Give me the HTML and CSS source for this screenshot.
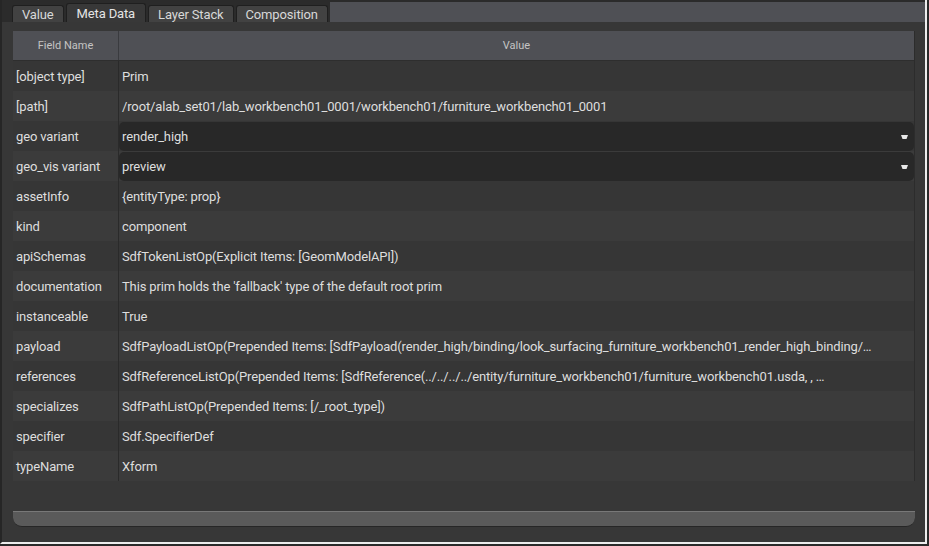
FILE: index.html
```html
<!DOCTYPE html>
<html>
<head>
<meta charset="utf-8">
<link rel="stylesheet" href="styles.css">
</head>
<body>
<div class="frame">
  <div class="tabbar">
    <div class="tab">Value</div>
    <div class="tab active">Meta Data</div>
    <div class="tab">Layer Stack</div>
    <div class="tab">Composition</div>
    <div class="tabfill"></div>
  </div>
  <div class="panel">
    <div class="table">
      <div class="row head">
        <div class="c1">Field Name</div>
        <div class="c2">Value</div>
      </div>
      <div class="row odd"><div class="c1">[object type]</div><div class="c2">Prim</div></div>
      <div class="row even"><div class="c1">[path]</div><div class="c2">/root/alab_set01/lab_workbench01_0001/workbench01/furniture_workbench01_0001</div></div>
      <div class="row odd"><div class="c1">geo variant</div><div class="c2 combo-cell"><div class="combo"><span>render_high</span><svg class="arrow" width="7" height="4" viewBox="0 0 7 4"><polygon points="0,0 7,0 5.5,4 1.5,4" fill="#e8e8e8"/></svg></div></div></div>
      <div class="row even"><div class="c1">geo_vis variant</div><div class="c2 combo-cell"><div class="combo"><span>preview</span><svg class="arrow" width="7" height="4" viewBox="0 0 7 4"><polygon points="0,0 7,0 5.5,4 1.5,4" fill="#e8e8e8"/></svg></div></div></div>
      <div class="row odd"><div class="c1">assetInfo</div><div class="c2">{entityType: prop}</div></div>
      <div class="row even"><div class="c1">kind</div><div class="c2">component</div></div>
      <div class="row odd"><div class="c1">apiSchemas</div><div class="c2">SdfTokenListOp(Explicit Items: [GeomModelAPI])</div></div>
      <div class="row even"><div class="c1">documentation</div><div class="c2">This prim holds the 'fallback' type of the default root prim</div></div>
      <div class="row odd"><div class="c1">instanceable</div><div class="c2">True</div></div>
      <div class="row even"><div class="c1">payload</div><div class="c2">SdfPayloadListOp(Prepended Items: [SdfPayload(render_high/binding/look_surfacing_furniture_workbench01_render_high_binding/…</div></div>
      <div class="row odd"><div class="c1">references</div><div class="c2">SdfReferenceListOp(Prepended Items: [SdfReference(../../../../entity/furniture_workbench01/furniture_workbench01.usda, , …</div></div>
      <div class="row even"><div class="c1">specializes</div><div class="c2">SdfPathListOp(Prepended Items: [/_root_type])</div></div>
      <div class="row odd"><div class="c1">specifier</div><div class="c2">Sdf.SpecifierDef</div></div>
      <div class="row even"><div class="c1">typeName</div><div class="c2">Xform</div></div>
    </div>
    <div class="spacer"></div>
    <div class="hscroll"></div>
  </div>
</div>
</body>
</html>
```

FILE: styles.css
```css
html, body {
  margin: 0;
  padding: 0;
  background: #2a2a2a;
  width: 929px;
  height: 546px;
  overflow: hidden;
  font-family: Roboto, "Liberation Sans", sans-serif;
  font-size: 13px;
  letter-spacing: -0.14px;
  color: #dedede;
}
.frame {
  width: 923px;
  height: 542px;
  border-left: 2px solid #262626;
  border-right: 2px solid #ececec;
  border-bottom: 2px solid #ececec;
  display: flex;
  flex-direction: column;
  background: #373737;
}
.tabbar {
  height: 20px;
  padding-top: 2px;
  background: #2b2b2b;
  display: flex;
  align-items: flex-end;
  padding-left: 10px;
  flex: none;
}
.tab {
  height: 16px;
  line-height: 17px;
  padding: 0 9px;
  background: #424242;
  border: 1px solid #1f1f1f;
  border-bottom: none;
  border-radius: 3px 3px 0 0;
  color: #d8d8d8;
  margin-right: 2px;
  font-size: 13px;
}
.tab.active {
  height: 18px;
  line-height: 19px;
  background: #383838;
  padding: 0 10px;
  color: #e4e4e4;
}
.tabfill {
  flex: 1;
  height: 20px;
  background: #4f5055;
}
.panel {
  flex: 1;
  padding: 9px 10px 15px 11px;
  display: flex;
  flex-direction: column;
}
.table {
  border-right: 1px solid #2c2c2c;
  flex: none;
}
.row {
  display: flex;
  height: 30px;
  align-items: stretch;
}
.row.head {
  height: 29px;
  background: #4f5055;
  border-bottom: 1px solid #2e2e2e;
  font-size: 11px;
  letter-spacing: 0;
  color: #c4c4c4;
}
.row.head .c1, .row.head .c2 {
  justify-content: center;
  padding: 0;
}
.row.head .c1 { width: 105px; border-right-color: #3a3b3f; }
.row.odd { background: #363636; }
.row.even { background: #3b3b3b; }
.c1 {
  width: 102px;
  padding-left: 3px;
  border-right: 1px solid #2a2a2a;
  display: flex;
  align-items: center;
  white-space: nowrap;
  flex: none;
}
.c2 {
  flex: 1;
  padding-left: 3px;
  display: flex;
  align-items: center;
  white-space: nowrap;
  overflow: hidden;
}
.c2.combo-cell {
  padding: 1px 0 0 0;
  align-items: stretch;
}
.combo {
  flex: 1;
  background: #282828;
  border-radius: 5px;
  display: flex;
  align-items: center;
  padding-left: 3px;
  padding-right: 6px;
  justify-content: space-between;
}
.arrow { display: block; }
.spacer { flex: 1; }
.hscroll {
  height: 14px;
  background: #5a5a5a;
  border-top: 1px solid #787878;
  border-bottom: 1px solid #262626;
  border-radius: 0 0 9px 9px;
  flex: none;
}
```
